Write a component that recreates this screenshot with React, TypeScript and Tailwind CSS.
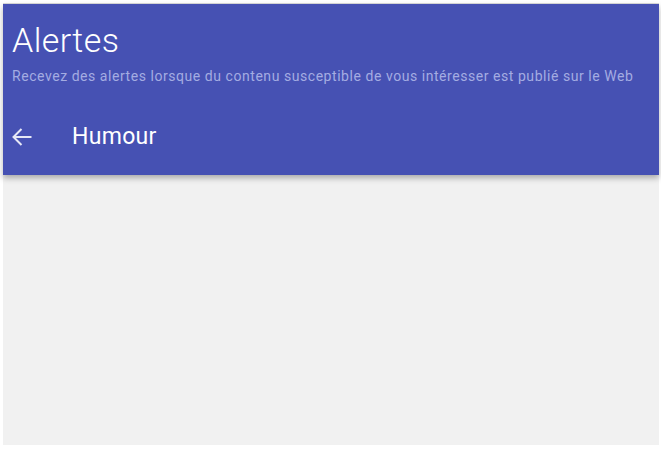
import React from "react"

const App = () => {
  return (
    <div className="w-[661px] h-[455px] bg-white pt-[3px] pl-[3px]" style={{ fontFamily: "Roboto, 'Liberation Sans', sans-serif" }}>
      <div className="w-[656px] h-[442px] bg-[#f1f1f1] border-t border-[#dcdcdc] flex flex-col">
        <header className="h-[171px] bg-[#4651b3] shadow-[0_3px_6px_rgba(0,0,0,0.3)] flex flex-col">
          <div className="pl-[9px] pt-[16px]">
            <h1 className="text-[34px] leading-[40px] font-light tracking-[0.4px] text-white">Alertes</h1>
            <p className="mt-[8px] text-[14px] leading-[16px] tracking-[0.55px] text-[#a4ace2]">
              Recevez des alertes lorsque du contenu susceptible de vous intéresser est publié sur le Web
            </p>
          </div>
          <div className="flex items-center mt-[40px] pl-[9px]">
            <svg width="20" height="18" viewBox="0 0 20 18" className="text-[#e6e8f6]">
              <path d="M19.5 9H1.5M9.5 1L1.5 9l8 8" stroke="currentColor" strokeWidth="2" fill="none" />
            </svg>
            <span className="ml-[40px] text-[23px] leading-[26px] tracking-[0.3px] text-white">Humour</span>
          </div>
        </header>
      </div>
    </div>
  )
}

export default App
